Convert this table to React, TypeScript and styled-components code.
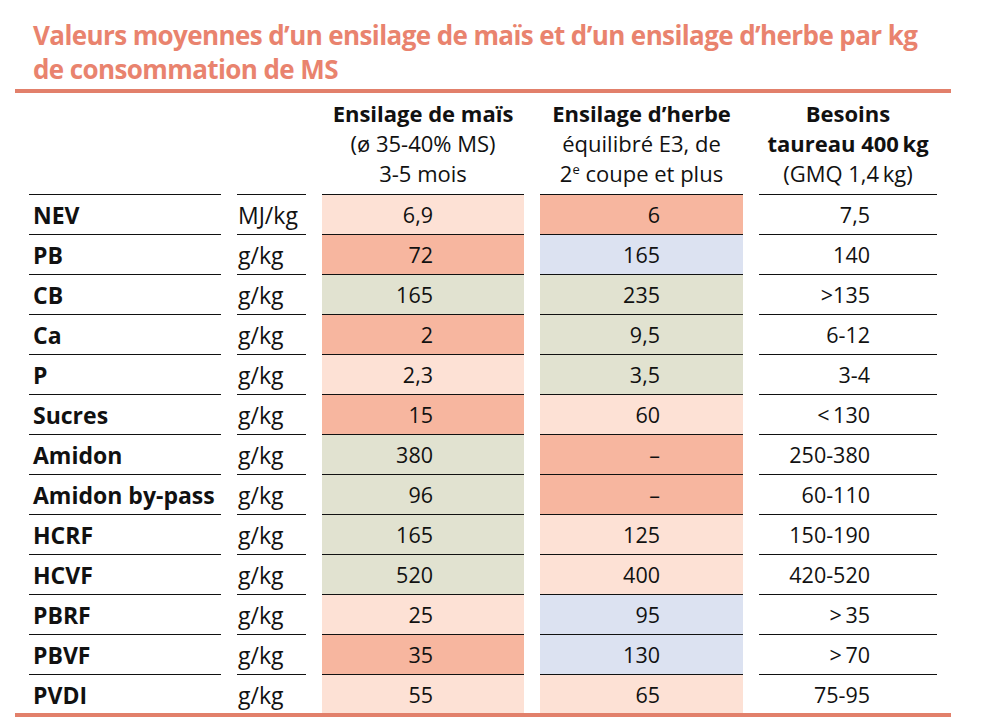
import styled, { createGlobalStyle } from "styled-components";

type Tone = "light" | "dark" | "green" | "blue";

const tones: Record<Tone, string> = {
    light: "#fde1d5",
    dark: "#f7b69f",
    green: "#e1e2d0",
    blue: "#dce2f1",
};

type Row = {
    label: string;
    unit: string;
    maize: string;
    maizeTone: Tone;
    grass: string;
    grassTone: Tone;
    need: string;
};

const rows: Row[] = [
    { label: "NEV", unit: "MJ/kg", maize: "6,9", maizeTone: "light", grass: "6", grassTone: "dark", need: "7,5" },
    { label: "PB", unit: "g/kg", maize: "72", maizeTone: "dark", grass: "165", grassTone: "blue", need: "140" },
    { label: "CB", unit: "g/kg", maize: "165", maizeTone: "green", grass: "235", grassTone: "green", need: ">135" },
    { label: "Ca", unit: "g/kg", maize: "2", maizeTone: "dark", grass: "9,5", grassTone: "green", need: "6-12" },
    { label: "P", unit: "g/kg", maize: "2,3", maizeTone: "light", grass: "3,5", grassTone: "green", need: "3-4" },
    { label: "Sucres", unit: "g/kg", maize: "15", maizeTone: "dark", grass: "60", grassTone: "light", need: "<\u2009130" },
    { label: "Amidon", unit: "g/kg", maize: "380", maizeTone: "green", grass: "–", grassTone: "dark", need: "250-380" },
    { label: "Amidon by-pass", unit: "g/kg", maize: "96", maizeTone: "green", grass: "–", grassTone: "dark", need: "60-110" },
    { label: "HCRF", unit: "g/kg", maize: "165", maizeTone: "green", grass: "125", grassTone: "light", need: "150-190" },
    { label: "HCVF", unit: "g/kg", maize: "520", maizeTone: "green", grass: "400", grassTone: "light", need: "420-520" },
    { label: "PBRF", unit: "g/kg", maize: "25", maizeTone: "light", grass: "95", grassTone: "blue", need: ">\u200935" },
    { label: "PBVF", unit: "g/kg", maize: "35", maizeTone: "dark", grass: "130", grassTone: "blue", need: ">\u200970" },
    { label: "PVDI", unit: "g/kg", maize: "55", maizeTone: "light", grass: "65", grassTone: "light", need: "75-95" },
];

const GlobalStyle = createGlobalStyle`
    body {
        margin: 0;
        background: #ffffff;
        font-family: "Open Sans", "Noto Sans", sans-serif;
        color: #111111;
    }
`;

function App() {
    return (
        <>
            <GlobalStyle />
            <Page>
                <Title>
                    Valeurs moyennes d’un ensilage de maïs et d’un ensilage d’herbe par kg
                    <br />
                    de consommation de MS
                </Title>
                <Rule />
                <Table>
                    <HeadCell />
                    <HeadCell />
                    <HeadCell>
                        <strong>Ensilage de maïs</strong>
                        <br />
                        (ø 35-40% MS)
                        <br />
                        3-5 mois
                    </HeadCell>
                    <HeadCell>
                        <strong>Ensilage d’herbe</strong>
                        <br />
                        équilibré E3, de
                        <br />
                        2<Sup>e</Sup> coupe et plus
                    </HeadCell>
                    <HeadCell>
                        <strong>Besoins</strong>
                        <br />
                        <strong>taureau 400{"\u2009"}kg</strong>
                        <br />
                        (GMQ 1,4{"\u2009"}kg)
                    </HeadCell>

                    {rows.map((r, i) => {
                        const last = i === rows.length - 1;
                        return [
                            <Label key={r.label + "l"} $last={last}>{r.label}</Label>,
                            <Unit key={r.label + "u"} $last={last}>{r.unit}</Unit>,
                            <Value key={r.label + "m"} $last={last} $tone={r.maizeTone} $pad={91}>{r.maize}</Value>,
                            <Value key={r.label + "g"} $last={last} $tone={r.grassTone} $pad={83}>{r.grass}</Value>,
                            <Value key={r.label + "n"} $last={last} $pad={67}>{r.need}</Value>,
                        ];
                    })}
                </Table>
                <Rule />
            </Page>
        </>
    );
}

const Page = styled.div`
    width: 936px;
    padding: 18px 0 0 15px;
`;

const Title = styled.h1`
    margin: 0 0 3px 18px;
    font-size: 26px;
    line-height: 34px;
    font-weight: 700;
    color: #e9836e;
    letter-spacing: -0.6px;
`;

const Rule = styled.div`
    height: 4px;
    background: #e2806b;
`;

const Table = styled.div`
    display: grid;
    grid-template-columns: 192px 69px 202px 203px 178px;
    column-gap: 16px;
    margin-left: 14px;
    width: 908px;
`;

const HeadCell = styled.div`
    padding: 5px 0 6px;
    line-height: 30px;
    font-size: 22px;
    text-align: center;
    white-space: nowrap;
    border-bottom: 1px solid #111;

    strong {
        font-weight: 700;
    }
`;

const Sup = styled.sup`
    font-size: 13px;
    vertical-align: 8px;
    line-height: 0;
`;

const Cell = styled.div<{ $last?: boolean }>`
    box-sizing: border-box;
    height: ${({ $last }) => ($last ? 38 : 40)}px;
    padding-top: 1px;
    line-height: 38px;
    border-bottom: ${({ $last }) => ($last ? "none" : "1px solid #111")};
    white-space: nowrap;
`;

const Label = styled(Cell)`
    padding-left: 4px;
    font-size: 23px;
    font-weight: 700;
`;

const Unit = styled(Cell)`
    padding-left: 1px;
    font-size: 23px;
`;

const Value = styled(Cell)<{ $tone?: Tone; $pad: number }>`
    background: ${({ $tone }) => ($tone ? tones[$tone] : "transparent")};
    padding-right: ${({ $pad }) => $pad}px;
    text-align: right;
    font-size: 21.5px;
`;

export default App;
